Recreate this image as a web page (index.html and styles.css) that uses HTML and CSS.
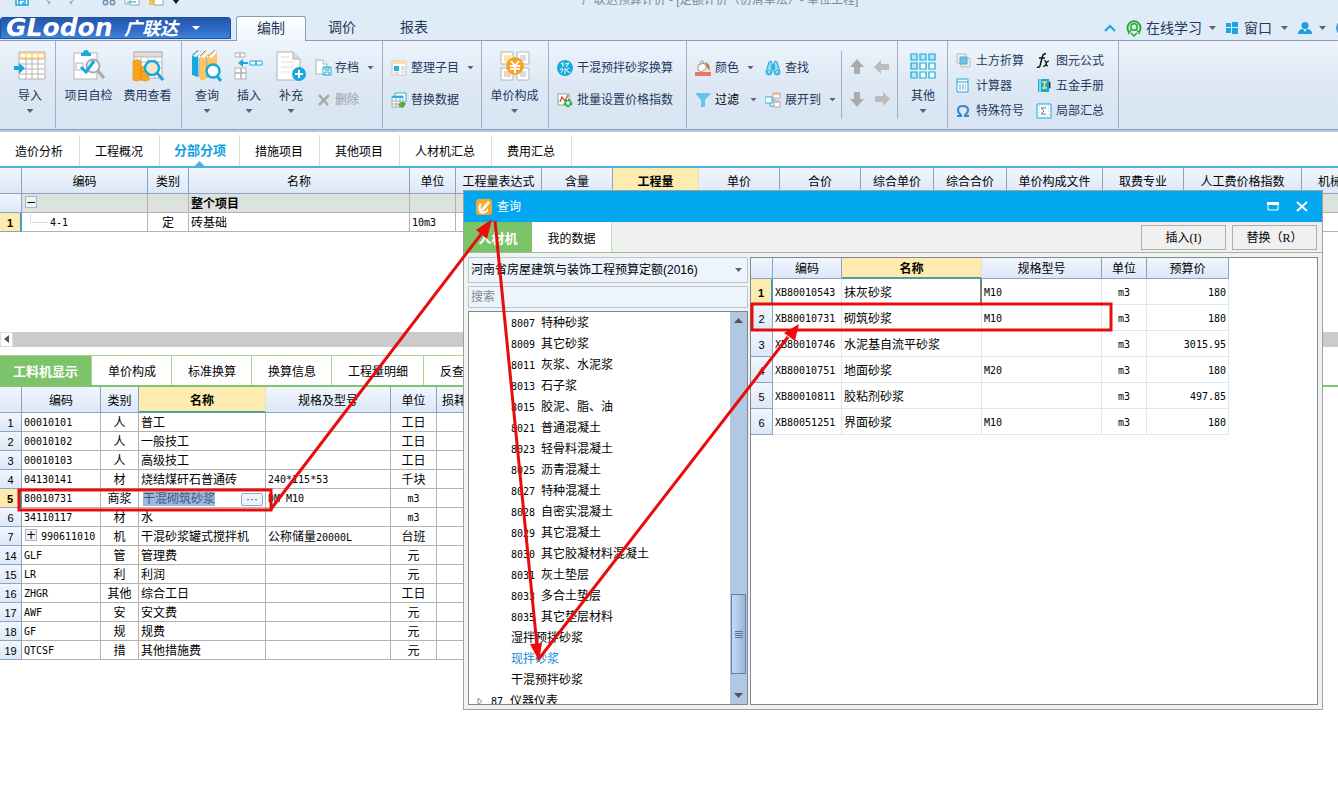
FILE: index.html
```html
<!DOCTYPE html>
<html lang="zh-CN">
<head>
<meta charset="utf-8">
<title>广联达预算计价</title>
<link rel="stylesheet" href="styles.css">
</head>
<body>
<header class="app-head">
  <div class="titlebar">
    <div class="quick">
      <svg width="14" height="14" viewBox="0 0 14 14" fill="#fff" stroke="#1ba6d8" stroke-width="1.5"><path d="M1 1h12v12H1zM4 13V8h6v5M8 10v3"/></svg>
      <svg class="undo" width="10" height="14" viewBox="0 0 10 14" fill="none" stroke="#8d9fb5"><path d="M6 9l-2 3M3 8l3 4"/></svg>
      <svg width="10" height="14" viewBox="0 0 10 14" fill="none" stroke="#8d9fb5"><path d="M4 9l2 3M7 8l-3 4"/></svg>
      <svg class="cut" width="14" height="14" viewBox="0 0 14 14" fill="none" stroke="#6f8fb5" stroke-width="1.5"><circle cx="3.500" cy="10.500" r="2.200"/><circle cx="10.500" cy="10.500" r="2.200"/><path d="M5 8l4-8M9 8L5 0"/></svg>
      <svg width="16" height="14" viewBox="0 0 16 14" fill="#fff"><path d="M1 1h9v11H1z" stroke="#9aa"/><path d="M6 1h9v12H6z" stroke="#9aa"/><path d="M3 10h9" stroke="#1ba6d8"/></svg>
      <svg width="16" height="14" viewBox="0 0 16 14"><path d="M1 1h10v12H1z" fill="#fdc23c"/><path d="M6 4h9v9H6z" fill="#fff" stroke="#9aa"/></svg>
      <svg width="8" height="14" viewBox="0 0 8 14"><path d="M1 8h6l-3 4z" fill="#111"/></svg>
    </div>
    <div class="app-title">广联达预算计价 - [定额计价（仿清单法）- 单位工程]</div>
  </div>
  <nav class="main-tabs">
    <button class="brand"><span class="brand-en">GLodon</span><span class="brand-cn">广联达</span><i class="caret light"></i></button>
    <button class="mtab active">编制</button>
    <button class="mtab">调价</button>
    <button class="mtab">报表</button>
    <div class="head-tools">
      <svg width="12" height="8" viewBox="0 0 12 8" fill="none" stroke="#1ba6e0" stroke-width="2"><path d="M1 7l5-5 5 5"/></svg>
      <button class="ht"><svg width="16" height="17" viewBox="0 0 16 17" fill="none" stroke="#27a92b"><path d="M3 12a6.500 6.500 0 1110 0" stroke-width="2"/><circle cx="8" cy="7" r="3.200" stroke-width="1.500"/><path d="M5 10q-1 2-3 4M11 10q1 2 3 4M5 13l3 3 3-3" stroke-width="1.500"/></svg><span>在线学习</span><i class="caret"></i></button>
      <button class="ht win"><svg width="12" height="12" viewBox="0 0 12 12" fill="#1ba6e0"><path d="M0 1h5v4H0zM6 0h6v5H6zM0 6h5v5H0zM6 6h6v6H6z"/></svg><span>窗口</span><i class="caret"></i></button>
      <button class="ht" aria-label="用户"><svg width="14" height="12" viewBox="0 0 14 12" fill="#1b9fe0"><circle cx="7" cy="3.500" r="3.500"/><path d="M0 12c0-4 3-5 5-5l2 3 2-3c2 0 5 1 5 5z"/></svg><i class="caret"></i></button>
      <svg width="16" height="16" viewBox="0 0 16 16"><circle cx="8" cy="8" r="8" fill="#3f9fe0"/><circle cx="5" cy="6" r="3" fill="#fff"/><circle cx="5" cy="6" r="1.500" fill="#334"/><path d="M5 11h8" stroke="#e33" stroke-width="2"/></svg>
    </div>
  </nav>
  <div class="ribbon">
    <section class="grp g1">
      <button class="big"><svg width="32" height="34" viewBox="0 0 32 34"><path d="M5 3h26v27H5z" fill="#fff" stroke="#b4b4b4"/><path d="M6 10h24M6 15h24M6 20h24M6 25h24M12 9v21M18 9v21M24 9v21" stroke="#b4b4b4"/><path d="M6 4h24v5H6zM12 4v5M18 4v5M24 4v5" fill="#fff" stroke="#fdbb45"/><path d="M0 17h5v-3l6 5-6 6v-4H0z" fill="#17a9dc"/></svg><span>导入</span><i class="caret"></i></button>
    </section>
    <section class="grp g2">
      <button class="big wide"><svg width="32" height="34" viewBox="0 0 32 34"><path d="M1 4h23v26H1z" fill="#fff" stroke="#b4b4b4"/><path d="M8 4h2c0-4 6-4 6 0h2v3H8z" fill="#17a9dc"/><path d="M3 14h7v7H3z" fill="none" stroke="#b4b4b4"/><circle cx="20" cy="17" r="6.500" fill="#f7fafc" stroke="#aaa" stroke-width="2"/><path d="M25 22l6 7" stroke="#aaa" stroke-width="3"/><path d="M8 18l5 5 8-11" fill="none" stroke="#17a9dc" stroke-width="3"/></svg><span>项目自检</span></button>
      <button class="big wide"><svg width="32" height="34" viewBox="0 0 32 34"><path d="M2 3h28v26H2z" fill="#fff" stroke="#b4b4b4"/><path d="M2 3h28v5H2z" fill="#e4dcdc" stroke="#b4b4b4"/><path d="M2 13h28M16 9v20M9 9v20M23 9v20M2 19h28" stroke="#b4b4b4"/><g fill="#fca81e" stroke="#d98a10" stroke-width=".6"><path d="M1 12q4-3 8 0v19q-4 2-8 0zM9 18q4-2 8 0v13q-4 2-8 0z"/><path d="M1 16q4 2 8 0M1 20q4 2 8 0M1 24q4 2 8 0M1 28q4 2 8 0M9 22q4 2 8 0M9 26q4 2 8 0"/></g><circle cx="20" cy="19" r="7" fill="#f4e6c8" stroke="#17a9dc" stroke-width="2.500"/><path d="M25 24l6 7" stroke="#2d9ce0" stroke-width="3"/></svg><span>费用查看</span></button>
    </section>
    <section class="grp g3">
      <button class="big"><svg width="32" height="34" viewBox="0 0 32 34"><path d="M1 7l6-5h3L7 7v21l-6-2z" fill="#17a9dc"/><path d="M9 8l6-6h3l-2 6v20l-3 3H9z" fill="#fdc65e"/><path d="M17 8l6-6h3v18l-5 9h-4z" fill="#fdc65e"/><path d="M2 7l6-5 2 1-5 5zM10 8l6-6 2 1-5 6zM18 8l6-6 2 1-5 6z" fill="#fff"/><path d="M1 6l6-5M9 7l6-6M17 7l7-6M8 9v19M16 9v20" stroke="#8c9aa5" fill="none"/><circle cx="22" cy="22" r="6.500" fill="#fff" stroke="#17a9dc" stroke-width="2.500"/><path d="M26 27l4 5" stroke="#17a9dc" stroke-width="3"/></svg><span>查询</span><i class="caret"></i></button>
      <button class="big"><svg width="32" height="34" viewBox="0 0 32 34" fill="#fff" stroke="#b0b0b0"><path d="M2 4h5v4H2zM7 4h5v4H7zM2 19h6v5H2zM8 19h5v5H8zM2 24h6v6H2zM8 24h5v6H8z"/><path d="M17 12h6v4h-6zM23 12h6v4h-6z" stroke="#17a9dc"/><path d="M5 14l5-4v3h5v2h-5v3z" fill="#17a9dc" stroke="none"/></svg><span>插入</span><i class="caret"></i></button>
      <button class="big"><svg width="32" height="34" viewBox="0 0 32 34"><path d="M2 3h16l7 7v21H2z" fill="#fff" stroke="#b0b0b0"/><path d="M18 3v7h7" fill="#ddd" stroke="#b0b0b0"/><path d="M6 8h8M6 13h14M6 18h12M6 23h9" stroke="#e0dcd8"/><circle cx="24" cy="25" r="7" fill="#17a9dc"/><path d="M24 21v8M20 25h8" stroke="#fff" stroke-width="2"/></svg><span>补充</span><i class="caret"></i></button>
      <div class="rows two">
        <button class="sm"><svg width="18" height="18" viewBox="0 0 18 18" fill="#fff"><path d="M1 1h7l4 4v10H1z" stroke="#b0b0b0"/><path d="M8 1v4h4" stroke="#b0b0b0"/><path d="M8 8h8v8H8zM10 8v3h4V8M10 16v-3h4v3" stroke="#17a9dc"/></svg><span>存档</span><i class="caret"></i></button>
        <button class="sm off"><svg width="18" height="18" viewBox="0 0 18 18"><path d="M4 4l9 10M14 4L4 14" stroke="#aaa" stroke-width="2.500"/></svg><span>删除</span></button>
      </div>
    </section>
    <section class="grp g4"><div class="rows two">
      <button class="sm"><svg width="16" height="16" viewBox="0 0 16 16" fill="#fff"><path d="M1 1h14v14H1z" stroke="#ccc8bf"/><path d="M1 1h14v3H1z" fill="#fde0a4"/><path d="M3 6h5v5H3z" fill="#2bb0dd"/><path d="M10 7h4M10 9h4M10 12h4M3 13h5" stroke="#bbb"/></svg><span>整理子目</span><i class="caret"></i></button>
      <button class="sm"><svg width="16" height="16" viewBox="0 0 16 16" fill="#fff"><path d="M4 1h11v9H4z" stroke="#2bb0dd"/><path d="M1 4h11v11H1z" stroke="#aaa"/><path d="M1 4h11v2H1z" fill="#2bb0dd"/><path d="M1 9h11M1 12h11M5 6v9M9 6v9" stroke="#aaa"/><path d="M7 13q4-6 8-1l-3 4q-3 0-5-3z" fill="#56ae3d"/></svg><span>替换数据</span></button>
    </div></section>
    <section class="grp g5">
      <button class="big wide"><svg width="32" height="34" viewBox="0 0 32 34" fill="#fff" stroke="#b4b4b4"><path d="M2 3h12v12H2zM18 3h12v12H18zM2 19h12v12H2zM18 19h12v12H18z"/><path d="M5 6h7v7H5z" fill="#fde6ae" stroke="none"/><path d="M21 6h6v6h-6zM21 22h6v6h-6z" fill="#d8daf0" stroke="none"/><path d="M5 22h7v6H5z" fill="#f5d0cd" stroke="none"/><circle cx="16" cy="17" r="9" fill="#f8a61b" stroke="none"/><path d="M12 12l4 5 4-5M11 17h10M11 20h10M16 17v7" fill="none" stroke="#fff" stroke-width="2"/></svg><span>单价构成</span><i class="caret"></i></button>
    </section>
    <section class="grp g6"><div class="rows two">
      <button class="sm"><svg width="16" height="16" viewBox="0 0 16 16"><circle cx="8" cy="8" r="8" fill="#17a9dc"/><path d="M4 3l2 2M6 2v5M8 4l4-1-3 4M3 9h3l-2 4M8 8v6M12 8l-3 2 4 3" fill="none" stroke="#fff"/></svg><span>干混预拌砂浆换算</span></button>
      <button class="sm"><svg width="16" height="16" viewBox="0 0 16 16"><path d="M1 2h11v11H1z" fill="#fff" stroke="#8a9"/><path d="M3 10l2-5 3 4 3-6" fill="none" stroke="#e05a40" stroke-width="1.500"/><circle cx="11" cy="11" r="3" fill="#fff" stroke="#2fa84f" stroke-width="2.500" stroke-dasharray="2.500 1"/><circle cx="11" cy="11" r="2.500" fill="none" stroke="#2fa84f"/></svg><span>批量设置价格指数</span></button>
    </div></section>
    <section class="grp g7">
      <div class="rows two cols">
        <button class="sm w1"><svg width="16" height="16" viewBox="0 0 16 16"><path d="M0 12h16v4H0z" fill="#f0735a"/><path d="M3 5l6-2 3 5-6 4-3-2z" fill="#fff" stroke="#998"/><path d="M5 5q0-5 3-4l1 3" fill="none" stroke="#998"/><path d="M10 2q5 1 5 9l-3-4z" fill="#b87820"/></svg><span>颜色</span><i class="caret"></i></button>
        <button class="sm"><svg width="16" height="16" viewBox="0 0 16 16" fill="#8fdcf5" stroke="#17a9dc"><path d="M4 2l2-1 1 2v9a3 3 0 01-6 0zM12 2l-2-1-1 2v9a3 3 0 006 0zM7 5h2v4H7z"/><circle cx="4" cy="12" r="1.500" fill="#fff"/><circle cx="12" cy="12" r="1.500" fill="#fff"/></svg><span>查找</span></button>
        <button class="sm w1 dark"><svg width="16" height="16" viewBox="0 0 16 16"><path d="M0 1h16L10 8v7H6V8z" fill="#62c5ea"/></svg><span>过滤</span><i class="caret far"></i></button>
        <button class="sm w2"><svg width="16" height="16" viewBox="0 0 16 16" fill="#fff"><path d="M8 1h7v5H8zM9 9h6v6H9z" stroke="#aaa"/><path d="M8 1h7v2H8zM9 9h6v2H9z" fill="#f5b88c"/><path d="M0 5h7v6H0zM7 8h3M5 11v3h4" stroke="#2bb0dd"/></svg><span>展开到</span><i class="caret"></i></button>
      </div>
    </section>
    <div class="rows two cols arrows">
      <button class="ar" aria-label="上移"><svg width="16" height="16" viewBox="0 0 16 16" fill="#aaaaaa"><path d="M8 0l7 8h-4v7H5V8H1z"/></svg></button>
      <button class="ar" aria-label="左移"><svg width="16" height="16" viewBox="0 0 16 16" fill="#bcbcbc"><path d="M0 8l7-7v4h8v6H7v4z"/></svg></button>
      <button class="ar" aria-label="下移"><svg width="16" height="16" viewBox="0 0 16 16" fill="#aaaaaa"><path d="M8 16l7-8h-4V1H5v7H1z"/></svg></button>
      <button class="ar" aria-label="右移"><svg width="16" height="16" viewBox="0 0 16 16" fill="#bcbcbc"><path d="M16 8L9 1v4H1v6h8v4z"/></svg></button>
    </div>
    <section class="grp g8">
      <button class="big"><svg width="32" height="34" viewBox="0 0 32 34" fill="#fff" stroke="#17a9dc" stroke-width="1.200"><path d="M4 5h6v6H4zM13 5h6v6h-6zM22 5h6v6h-6zM4 14h6v6H4zM4 23h6v6H4z" fill="#b8e4f7"/><path d="M13 14h6v6h-6zM22 14h6v6h-6zM13 23h6v6h-6zM22 23h6v6h-6z"/></svg><span>其他</span><i class="caret"></i></button>
    </section>
    <section class="grp g9"><div class="rows three cols">
      <button class="sm"><svg width="16" height="16" viewBox="0 0 16 16" fill="none"><path d="M1 1h9v9H1zM5 5h9v9H5z" stroke="#c9b9a9"/><path d="M4 4h7v7H4z" fill="#6cc5e4" stroke="#4fa9cc"/></svg><span>土方折算</span></button>
      <button class="sm"><svg width="16" height="16" viewBox="0 0 16 16" fill="none" stroke="#111"><path d="M10 1q-3-1-4 4L4 13q-1 2-3 1M3 5h6" stroke-width="1.500"/><path d="M8 8q2-1 2 2t2 3M13 8q-2 0-3 3t-3 2" stroke-width="1.200"/></svg><span>图元公式</span></button>
      <button class="sm"><svg width="16" height="16" viewBox="0 0 16 16"><path d="M1 1h11v13H1z" fill="#fff" stroke="#17a9dc"/><path d="M1 4h11" stroke="#17a9dc"/><path d="M3 7h7M3 9h7M3 11h7" stroke="#5f9bd0" stroke-dasharray="2 1"/></svg><span>计算器</span></button>
      <button class="sm"><svg width="16" height="16" viewBox="0 0 16 16"><path d="M2 1h11v13H2z" fill="#17a9dc"/><path d="M4 1v13" stroke="#fff"/><path d="M6 4h5M6 10h5M8.500 4v6" stroke="#ffe15e" stroke-width="1.500"/><path d="M13 4h1v6h-1" stroke="#456"/></svg><span>五金手册</span></button>
      <button class="sm"><svg width="16" height="16" viewBox="0 0 16 16" fill="none" stroke="#3789c9" stroke-width="2"><path d="M1 13h4v-1q-3-2-3-5 0-4 5-4t5 4q0 3-3 5v1h4"/></svg><span>特殊符号</span></button>
      <button class="sm"><svg width="16" height="16" viewBox="0 0 16 16" fill="none"><path d="M1 1h14v14H1z" fill="#fff" stroke="#17a9dc"/><path d="M3 3h10v10H3z" stroke="#8cd8ee" stroke-dasharray="1 2"/><path d="M10 5H5l3 3-3 3h5" stroke="#777"/></svg><span>局部汇总</span></button>
    </div></section>
  </div>
</header>

<nav class="page-tabs">
  <button>造价分析</button><button>工程概况</button><button class="on">分部分项</button><button>措施项目</button><button>其他项目</button><button>人材机汇总</button><button>费用汇总</button>
</nav>

<main class="work">
  <section class="upper">
    <table class="grid main-grid">
      <colgroup><col class="c22"><col class="c126"><col class="c41"><col class="c221"><col class="c46"><col class="c86"><col class="c71"><col class="c86"><col class="c81"><col class="c81"><col class="c73"><col class="c73"><col class="c96"><col class="c81"><col class="c118"><col class="c81"></colgroup>
      <thead><tr><th></th><th>编码</th><th>类别</th><th>名称</th><th>单位</th><th>工程量表达式</th><th>含量</th><th class="hot">工程量</th><th>单价</th><th>合价</th><th>综合单价</th><th>综合合价</th><th>单价构成文件</th><th>取费专业</th><th>人工费价格指数</th><th>机械费价</th></tr></thead>
      <tbody>
        <tr class="sum"><th></th><td><button class="tog" aria-label="折叠">−</button></td><td></td><td><b>整个项目</b></td><td></td><td></td><td></td><td></td><td></td><td></td><td></td><td></td><td></td><td></td><td></td><td></td></tr>
        <tr><th class="cur">1</th><td class="branch"><i></i><span class="m">4-1</span></td><td class="c">定</td><td>砖基础</td><td class="m">10m3</td><td></td><td></td><td></td><td></td><td></td><td></td><td></td><td></td><td></td><td></td><td></td></tr>
      </tbody>
    </table>
  </section>
  <div class="hscroll"><button aria-label="向左滚动"><svg width="11" height="13" viewBox="0 0 11 13"><path d="M8 2v8L3 6z" fill="#555"/></svg></button></div>
  <nav class="sub-tabs">
    <button class="on">工料机显示</button><button>单价构成</button><button>标准换算</button><button>换算信息</button><button>工程量明细</button><button>反查</button>
  </nav>
  <section class="lower">
    <table class="grid sub-grid">
      <colgroup><col class="c22"><col class="c79"><col class="c38"><col class="c127"><col class="c125"><col class="c46"><col class="c73"></colgroup>
      <thead><tr><th></th><th>编码</th><th>类别</th><th class="hot line">名称</th><th>规格及型号</th><th>单位</th><th class="l">损耗</th></tr></thead>
      <tbody>
        <tr><th>1</th><td class="m">00010101</td><td class="c">人</td><td>普工</td><td></td><td class="c">工日</td><td></td></tr>
        <tr><th>2</th><td class="m">00010102</td><td class="c">人</td><td>一般技工</td><td></td><td class="c">工日</td><td></td></tr>
        <tr><th>3</th><td class="m">00010103</td><td class="c">人</td><td>高级技工</td><td></td><td class="c">工日</td><td></td></tr>
        <tr><th>4</th><td class="m">04130141</td><td class="c">材</td><td>烧结煤矸石普通砖</td><td class="m">240*115*53</td><td class="c">千块</td><td></td></tr>
        <tr><th class="cur">5</th><td class="m">80010731</td><td class="c">商浆</td><td><div class="edit"><input aria-label="名称" value="干混砌筑砂浆"><button aria-label="更多">···</button></div></td><td class="m">DM M10</td><td class="c m">m3</td><td></td></tr>
        <tr><th>6</th><td class="m">34110117</td><td class="c">材</td><td>水</td><td></td><td class="c m">m3</td><td></td></tr>
        <tr><th>7</th><td class="m"><button class="tog" aria-label="展开">+</button>990611010</td><td class="c">机</td><td>干混砂浆罐式搅拌机</td><td>公称储量<span class="m">20000L</span></td><td class="c">台班</td><td></td></tr>
        <tr><th>14</th><td class="m">GLF</td><td class="c">管</td><td>管理费</td><td></td><td class="c">元</td><td></td></tr>
        <tr><th>15</th><td class="m">LR</td><td class="c">利</td><td>利润</td><td></td><td class="c">元</td><td></td></tr>
        <tr><th>16</th><td class="m">ZHGR</td><td class="c">其他</td><td>综合工日</td><td></td><td class="c">工日</td><td></td></tr>
        <tr><th>17</th><td class="m">AWF</td><td class="c">安</td><td>安文费</td><td></td><td class="c">元</td><td></td></tr>
        <tr><th>18</th><td class="m">GF</td><td class="c">规</td><td>规费</td><td></td><td class="c">元</td><td></td></tr>
        <tr><th>19</th><td class="m">QTCSF</td><td class="c">措</td><td>其他措施费</td><td></td><td class="c">元</td><td></td></tr>
      </tbody>
    </table>
  </section>
</main>

<div class="dialog" role="dialog" aria-label="查询">
  <div class="dlg-title">
    <svg width="16" height="16" viewBox="0 0 16 16"><rect width="16" height="16" rx="3" fill="#f8a72a"/><path d="M3 4l4 1-2 1q-1 4 1 6 4 1 6-3v3q-3 4-8 2-3-4-1-8z" fill="#fff"/><path d="M6 9l6-7 2 2-6 7-3 1z" fill="#fff"/></svg>
    <span>查询</span>
    <button aria-label="最大化"><svg width="12" height="12" viewBox="0 0 12 12"><path d="M1 2h10v7H1z" fill="none" stroke="#fff"/><path d="M0 1h12v3H0z" fill="#fff"/></svg></button>
    <button aria-label="关闭"><svg width="12" height="12" viewBox="0 0 12 12" stroke="#fff" stroke-width="2"><path d="M1 1l10 9M11 1L1 10"/></svg></button>
  </div>
  <div class="dlg-bar">
    <button class="dt on">人材机</button><button class="dt">我的数据</button>
    <div class="acts"><button>插入<span class="s">(I)</span></button><button>替换（<span class="s">R</span>）</button></div>
  </div>
  <div class="dlg-body">
    <div class="left">
      <div class="combo"><select aria-label="定额库"><option>河南省房屋建筑与装饰工程预算定额(2016)</option></select><i class="caret"></i></div>
      <input class="search" type="text" placeholder="搜索" aria-label="搜索">
      <div class="tree">
        <ul>
          <li><span class="m">8007</span>特种砂浆</li>
          <li><span class="m">8009</span>其它砂浆</li>
          <li><span class="m">8011</span>灰浆、水泥浆</li>
          <li><span class="m">8013</span>石子浆</li>
          <li><span class="m">8015</span>胶泥、脂、油</li>
          <li><span class="m">8021</span>普通混凝土</li>
          <li><span class="m">8023</span>轻骨料混凝土</li>
          <li><span class="m">8025</span>沥青混凝土</li>
          <li><span class="m">8027</span>特种混凝土</li>
          <li><span class="m">8028</span>自密实混凝土</li>
          <li><span class="m">8029</span>其它混凝土</li>
          <li><span class="m">8030</span>其它胶凝材料混凝土</li>
          <li><span class="m">8031</span>灰土垫层</li>
          <li><span class="m">8033</span>多合土垫层</li>
          <li><span class="m">8035</span>其它垫层材料</li>
          <li>湿拌预拌砂浆</li>
          <li class="sel">现拌砂浆</li>
          <li>干混预拌砂浆</li>
          <li class="root"><svg width="6" height="9" viewBox="0 0 6 9"><path d="M1 1l4 3.500L1 8z" fill="#fff" stroke="#888"/></svg><span class="m">87</span>仪器仪表</li>
        </ul>
        <div class="vscroll"><i class="up"></i><div class="thumb"><i></i><i></i><i></i><i></i></div><i class="down"></i></div>
      </div>
    </div>
    <div class="right">
      <table class="grid res-grid">
        <colgroup><col class="c22"><col class="c69"><col class="c140"><col class="c120"><col class="c45"><col class="c82"></colgroup>
        <thead><tr><th></th><th>编码</th><th class="hot line">名称</th><th>规格型号</th><th>单位</th><th>预算价</th></tr></thead>
        <tbody>
          <tr><th class="cur">1</th><td class="m">XB80010543</td><td class="focus">抹灰砂浆</td><td class="m">M10</td><td class="c m">m3</td><td class="m r">180</td></tr>
          <tr><th>2</th><td class="m">XB80010731</td><td>砌筑砂浆</td><td class="m">M10</td><td class="c m">m3</td><td class="m r">180</td></tr>
          <tr><th>3</th><td class="m">XB80010746</td><td>水泥基自流平砂浆</td><td></td><td class="c m">m3</td><td class="m r">3015.95</td></tr>
          <tr><th>4</th><td class="m">XB80010751</td><td>地面砂浆</td><td class="m">M20</td><td class="c m">m3</td><td class="m r">180</td></tr>
          <tr><th>5</th><td class="m">XB80010811</td><td>胶粘剂砂浆</td><td></td><td class="c m">m3</td><td class="m r">497.85</td></tr>
          <tr><th>6</th><td class="m">XB80051251</td><td>界面砂浆</td><td class="m">M10</td><td class="c m">m3</td><td class="m r">180</td></tr>
        </tbody>
      </table>
    </div>
  </div>
</div>

<svg class="marks" width="1338" height="796" viewBox="0 0 1338 796" fill="none" stroke="#e80c0c" stroke-width="3">
  <rect x="19" y="490" width="252" height="20"/>
  <rect x="752" y="304" width="359" height="26"/>
  <path d="M271 509L482 233M495 221L537 646M538 660L788 337"/>
  <g fill="#f00b0b" stroke="none"><path d="M492 219l-16 11 11 9zM539 661l-9-17 12-1zM799 324l-15 9 11 8z"/></g>
</svg>
</body>
</html>
```
FILE: styles.css
```css
* { box-sizing: border-box; }
body {
  margin: 0;
  min-height: 100vh;
  position: relative;
  overflow: hidden;
  background: #fff;
  color: #000;
  font: 12px/18px "Liberation Sans", "Noto Sans CJK SC", sans-serif;
}
button, input, select { font: inherit; color: inherit; margin: 0; padding: 0; border: 0; background: none; }
button { white-space: nowrap; }
svg { display: block; flex: none; }
ul { margin: 0; padding: 0; list-style: none; }
.m { font-family: "DejaVu Sans Mono", "Noto Sans CJK SC", monospace; font-size: 10px; }
.s { font-family: "Liberation Serif", serif; }
.caret { width: 7px; height: 4px; background: #56657a; clip-path: polygon(0 0, 100% 0, 50% 100%); flex: none; }
.caret.light { width: 8px; height: 4px; background: #fff; }

/* header */
.app-head { background: #dfebf7; color: #1e395b; }
.titlebar { height: 16px; position: relative; }
.quick { display: flex; align-items: flex-end; gap: 8px; height: 6px; padding-left: 15px; overflow: hidden; }
.quick .undo { margin-left: 7px; margin-right: 4px; }
.quick .cut { margin-left: 18px; }
.app-title { position: absolute; top: -8px; left: 0; right: 0; padding-left: 102px; text-align: center; color: #7c8aa0; line-height: 16px; }
.main-tabs { display: flex; height: 25px; align-items: stretch; border-bottom: 1px solid #8a9cb8; }
.brand { display: flex; align-items: center; width: 231px; margin-top: 1px; padding-left: 5px; height: 22px; color: #fff; border: 1px solid #1c4f9f; border-radius: 3px 3px 0 0; background: linear-gradient(#2558ac, #2f6ac6 60%, #3f86dc); }
.brand-en { font: italic bold 25px/20px "DejaVu Sans", sans-serif; width: 118px; text-align: left; }
.brand-cn { font: italic bold 18px/18px "Noto Sans CJK SC", sans-serif; margin-right: 14px; padding-bottom: 2px; }
.mtab { width: 72px; font-size: 14px; line-height: 20px; }
.mtab.active { width: 70px; height: 25px; margin-left: 5px; padding-bottom: 3px; border: 1px solid #8a9cb8; border-bottom: 0; border-radius: 3px 3px 0 0; background: linear-gradient(#fff, #eef5fd); }
.mtab:not(.active) { padding-bottom: 2px; }
.head-tools { margin-left: auto; display: flex; align-items: center; gap: 10px; height: 24px; margin-right: -14px; }
.ht { display: flex; align-items: center; gap: 4px; font-size: 14px; }
.ht.win { gap: 6px; }
.ht .caret { margin-left: 3px; }

.ribbon { display: flex; height: 91px; background: linear-gradient(#edf4fc, #dde8f4 50%, #d8e4f2); border-bottom: 2px solid #b6c8de; box-shadow: inset 0 -1px #8a9cb8; }
.grp { display: flex; height: 87px; border-right: 1px solid #9fb0c8; }
.g1 { width: 56px; padding-left: 9px; }
.g2 { width: 126px; padding-left: 3px; }
.g3 { width: 201px; padding-left: 4px; }
.g4 { width: 99px; padding-left: 8px; }
.g5 { width: 67px; padding-left: 3px; }
.g6 { width: 138px; padding-left: 8px; }
.g7 { width: 155px; height: 68px; margin-top: 10px; padding-left: 8px; }
.g7 .rows { padding-top: 0; }
.g8 { width: 50px; padding-left: 4px; }
.g9 { width: 171px; padding-left: 8px; }
.big { display: flex; flex-direction: column; align-items: center; width: 42px; padding-top: 8px; height: 80px; }
.big.wide { width: 59px; }
.big span { margin-top: 4px; }
.big .caret { margin-top: 4px; }
.rows { display: grid; align-content: start; }
.rows.cols { grid-template-columns: max-content max-content; }
.two { padding-top: 10px; grid-auto-rows: 32px; }
.three { padding-top: 7px; grid-auto-rows: 25px; column-gap: 12px; }
.sm { display: flex; align-items: center; gap: 4px; text-align: left; }
.two .sm { padding-top: 1px; }
.g3 .sm { gap: 2px; padding-left: 3px; }
.sm .caret { margin-left: 4px; }
.g3 .sm .caret { margin-left: 6px; }
.off { color: #9aa0a8; }
.dark { color: #000; }
.w1 { width: 70px; }
.sm .caret.far { margin-left: 7px; }
.arrows { height: 78px; width: 56px; padding-left: 7px; border-right: 1px solid #9fb0c8; column-gap: 9px; }
.ar { display: flex; align-items: center; }

/* page tabs */
.page-tabs { display: flex; height: 36px; padding-top: 3px; border-bottom: 2px solid #49b3d9; }
.page-tabs button { padding: 3px 16px 0 15px; border-right: 1px solid #dcdcdc; height: 31px; }
.page-tabs .on { color: #12a0e2; font-weight: bold; font-size: 13px; padding: 0 13px 0 14px; position: relative; }
.page-tabs .on::after { content: ""; position: absolute; left: 50%; bottom: 0; width: 10px; height: 5px; margin-left: -5px; background: #49b3d9; clip-path: polygon(50% 0, 100% 100%, 0 100%); }

/* tables */
.grid { table-layout: fixed; border-collapse: separate; border-spacing: 0; width: 0; }
.grid th, .grid td { height: 19px; padding: 2px 2px 0; line-height: 16px; overflow: hidden; white-space: nowrap; text-align: left; border-right: 1px solid #b2b2b2; border-bottom: 1px solid #b2b2b2; }
.grid span.m { line-height: 10px; }
.grid .c { text-align: center; }
.grid .r { text-align: right; }
.grid th { padding: 2px 0 0; font-weight: normal; text-align: center; border-color: #8ca3c4; background: linear-gradient(#f1f6fd, #dce8f8); }
.grid thead th { height: 26px; }
.grid tbody th { font-size: 11px; }
.grid th.hot { background: #fdebaf; font-weight: bold; border-right-color: #e6dfc0; }
.grid th.line { border-bottom: 2px solid #4f9f9f; padding-top: 3px; }
.grid th.cur { background: #fdebaf; font-weight: bold; border-right: 2px solid #3f9fc0; }
.grid th.l { text-align: left; padding-left: 5px; }
.sum td { background: #dce2de; }
.c22 { width: 22px; } .c38 { width: 38px; } .c41 { width: 41px; } .c45 { width: 45px; } .c46 { width: 46px; }
.c69 { width: 69px; } .c71 { width: 71px; } .c73 { width: 73px; } .c79 { width: 79px; } .c81 { width: 81px; }
.c82 { width: 82px; } .c86 { width: 86px; } .c96 { width: 96px; } .c118 { width: 118px; } .c120 { width: 120px; }
.c125 { width: 125px; } .c126 { width: 126px; } .c127 { width: 127px; } .c140 { width: 140px; } .c221 { width: 221px; }
.tog { display: inline-block; vertical-align: top; width: 12px; height: 12px; margin: 0 4px 0 1px; border: 1px solid #a9b6c8; background: #eef2f7; font: 12px/10px "DejaVu Sans", sans-serif; }
.grid td.branch { padding: 0 0 0 8px; }
.branch i { display: inline-block; width: 18px; height: 9px; margin-right: 2px; vertical-align: top; border-left: 1px solid #d5dde6; border-bottom: 1px solid #d5dde6; }
.upper { height: 164px; overflow: hidden; }
.hscroll { height: 15px; background: #cbcbcb; }
.hscroll button { height: 15px; background: #fff; border: 1px solid #ddd; }
.sub-tabs { display: flex; height: 32px; margin-top: 8px; border-bottom: 2px solid #7fc470; overflow: hidden; }
.sub-tabs button { padding: 3px 15px 0 16px; border-right: 1px solid #a9d695; border-top: 1px solid #a9d695; }
.sub-tabs .on { width: 92px; padding: 2px 0 0; background: #7dc36a; color: #fff; font-weight: bold; font-size: 13px; }
.edit { display: flex; align-items: center; justify-content: space-between; height: 14px; padding-left: 2px; }
.edit input { width: 72px; height: 14px; background: #9db8dc; color: #3b587d; }
.edit button { width: 22px; height: 13px; border: 1px solid #8fabd0; border-radius: 2px; background: #edf4fc; color: #345; line-height: 10px; }

/* query window */
.dialog { position: absolute; left: 463px; top: 190px; width: 860px; height: 520px; display: flex; flex-direction: column; border: 1px solid #a0a0a0; background: #f0f0f0; }
.dlg-title { display: flex; align-items: center; gap: 5px; height: 31px; padding: 0 14px 0 12px; background: #03a7f0; color: #fff; }
.dlg-title span { margin-right: auto; }
.dlg-title button { padding-left: 12px; }
.dlg-bar { display: flex; height: 31px; border-bottom: 1px solid #9cba97; }
.dt { width: 80px; padding-top: 4px; background: #fff; border-right: 1px solid #bfe0b0; }
.dt.on { width: 68px; background: #7dc36a; color: #fff; font-weight: bold; font-size: 13px; border: 0; }
.acts { margin-left: auto; display: flex; gap: 6px; padding: 3px 5px 2px; }
.acts button { width: 85px; border: 1px solid #adadad; }
.dlg-body { flex: 1; min-height: 0; display: flex; gap: 2px; padding: 4px; background: #f1f3f1; }
.left { width: 280px; display: flex; flex-direction: column; gap: 3px; }
.combo { display: flex; align-items: center; height: 26px; padding-right: 5px; border: 1px solid #b9c6d6; background: #edf4fc; }
.combo select { flex: 1; appearance: none; padding-left: 2px; outline: 0; }
.search { height: 22px; padding: 0 2px; border: 1px solid #b9c6d6; background: #edf4fc; }
.search::placeholder { color: #808890; opacity: 1; }
.tree { flex: 1; min-height: 0; display: flex; border: 1px solid #828790; background: #fff; overflow: hidden; }
.tree ul { flex: 1; padding-top: 1px; }
.tree li { height: 21px; line-height: 21px; padding-left: 42px; display: flex; align-items: center; }
.tree li .m { width: 30px; }
.tree .sel { color: #1886d4; }
.tree .root { padding-left: 8px; gap: 8px; }
.tree .root .m { width: 11px; }
.vscroll { width: 17px; display: flex; flex-direction: column; background: #b2c7e2; align-items: center; padding: 6px 0; }
.up, .down { width: 9px; height: 5px; background: #4d5663; clip-path: polygon(50% 0, 100% 100%, 0 100%); }
.down { clip-path: polygon(0 0, 100% 0, 50% 100%); }
.thumb { width: 15px; height: 80px; margin-top: auto; margin-bottom: 19px; border: 1px solid #6480aa; background: linear-gradient(90deg, #c8dbf1, #9bb6db); display: flex; flex-direction: column; align-items: center; justify-content: center; gap: 1px; }
.thumb i { width: 8px; height: 1px; background: #5d7494; }
.right { flex: 1; border: 1px solid #828790; background: #fff; overflow: hidden; }
.res-grid td { height: 26px; border-color: #dde7f2; }
.res-grid thead th { height: 21px; }
.grid td.focus { border-right: 2px solid #808080; }

.marks { position: absolute; left: 0; top: 0; pointer-events: none; }
```
